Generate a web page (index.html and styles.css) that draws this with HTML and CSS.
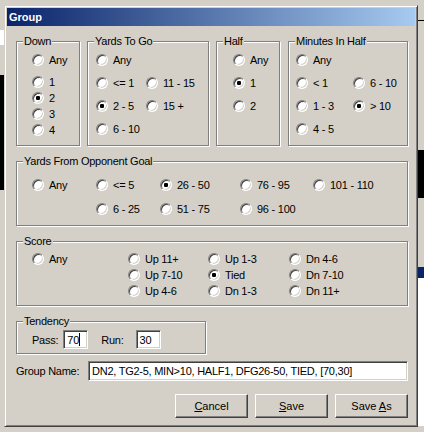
FILE: index.html
```html
<!DOCTYPE html>
<html lang="en">
<head>
  <meta charset="UTF-8">
  <title>Group</title>
  <link rel="stylesheet" href="styles.css">
</head>
<body>
  <div class="desk">
    <div class="strip left">
      <span class="s-grey" style="height:30px"></span>
      <span class="s-white" style="height:15px"></span>
      <span class="s-grey" style="height:30px"></span>
      <span class="s-black" style="height:115px"></span>
      <span class="s-grey fill"></span>
    </div>

    <div class="dialog">
      <div class="titlebar">Group</div>
      <div class="content">

        <div class="row1">
          <fieldset class="box down">
            <legend>Down</legend>
            <div class="opts down-opts">
              <label class="opt first"><span class="radio"></span>Any</label>
              <label class="opt"><span class="radio"></span>1</label>
              <label class="opt"><span class="radio on"></span>2</label>
              <label class="opt"><span class="radio"></span>3</label>
              <label class="opt"><span class="radio"></span>4</label>
            </div>
          </fieldset>

          <fieldset class="box ytg">
            <legend>Yards To Go</legend>
            <div class="opts ytg-opts">
              <label class="opt"><span class="radio"></span>Any</label>
              <span></span>
              <label class="opt"><span class="radio"></span>&lt;= 1</label>
              <label class="opt"><span class="radio"></span>11 - 15</label>
              <label class="opt"><span class="radio on"></span>2 - 5</label>
              <label class="opt"><span class="radio"></span>15 +</label>
              <label class="opt"><span class="radio"></span>6 - 10</label>
            </div>
          </fieldset>

          <fieldset class="box half">
            <legend>Half</legend>
            <div class="opts half-opts">
              <label class="opt"><span class="radio"></span>Any</label>
              <label class="opt"><span class="radio on"></span>1</label>
              <label class="opt"><span class="radio"></span>2</label>
            </div>
          </fieldset>

          <fieldset class="box minutes">
            <legend>Minutes In Half</legend>
            <div class="opts min-opts">
              <label class="opt"><span class="radio"></span>Any</label>
              <span></span>
              <label class="opt"><span class="radio"></span>&lt; 1</label>
              <label class="opt"><span class="radio"></span>6 - 10</label>
              <label class="opt"><span class="radio"></span>1 - 3</label>
              <label class="opt"><span class="radio on"></span>&gt; 10</label>
              <label class="opt"><span class="radio"></span>4 - 5</label>
            </div>
          </fieldset>
        </div>

        <fieldset class="box yfog">
          <legend>Yards From Opponent Goal</legend>
          <div class="opts yfog-opts">
            <label class="opt"><span class="radio"></span>Any</label>
            <label class="opt"><span class="radio"></span>&lt;= 5</label>
            <label class="opt"><span class="radio on"></span>26 - 50</label>
            <label class="opt"><span class="radio"></span>76 - 95</label>
            <label class="opt"><span class="radio"></span>101 - 110</label>
            <span></span>
            <label class="opt"><span class="radio"></span>6 - 25</label>
            <label class="opt"><span class="radio"></span>51 - 75</label>
            <label class="opt"><span class="radio"></span>96 - 100</label>
          </div>
        </fieldset>

        <fieldset class="box score">
          <legend>Score</legend>
          <div class="opts score-opts">
            <label class="opt"><span class="radio"></span>Any</label>
            <label class="opt"><span class="radio"></span>Up 11+</label>
            <label class="opt"><span class="radio"></span>Up 1-3</label>
            <label class="opt"><span class="radio"></span>Dn 4-6</label>
            <span></span>
            <label class="opt"><span class="radio"></span>Up 7-10</label>
            <label class="opt"><span class="radio on"></span>Tied</label>
            <label class="opt"><span class="radio"></span>Dn 7-10</label>
            <span></span>
            <label class="opt"><span class="radio"></span>Up 4-6</label>
            <label class="opt"><span class="radio"></span>Dn 1-3</label>
            <label class="opt"><span class="radio"></span>Dn 11+</label>
          </div>
        </fieldset>

        <fieldset class="box tendency">
          <legend>Tendency</legend>
          <div class="tend-row">
            <span>Pass:</span>
            <span class="edit pass">70<i class="caret"></i></span>
            <span class="run-label">Run:</span>
            <span class="edit run">30</span>
          </div>
        </fieldset>

        <div class="name-row">
          <span>Group Name:</span>
          <span class="edit name">DN2, TG2-5, MIN&gt;10, HALF1, DFG26-50, TIED, [70,30]</span>
        </div>

        <div class="buttons">
          <button><u>C</u>ancel</button>
          <button><u>S</u>ave</button>
          <button>Save <u>A</u>s</button>
        </div>

      </div>
    </div>

    <div class="strip right">
      <span class="s-grey" style="height:20px"></span>
      <span class="s-black" style="height:1px"></span>
      <span class="s-grey" style="height:129px"></span>
      <span class="s-black" style="height:48px"></span>
      <span class="s-grey" style="height:69px"></span>
      <span class="s-navy" style="height:11px"></span>
      <span class="s-white" style="height:148px"></span>
      <span class="s-grey fill"></span>
    </div>
  </div>
</body>
</html>
```

FILE: styles.css
```css
* { box-sizing: border-box; }
body { margin: 0; width: 424px; height: 432px; overflow: hidden; background: #d4d0c8; font-family: "Liberation Sans", Arial, sans-serif; font-size: 11px; letter-spacing: -0.25px; color: #000; }

.desk { display: grid; grid-template-columns: 4px 414px 6px; height: 432px; }
.strip { display: flex; flex-direction: column; }
.strip span { display: block; flex: none; }
.strip .fill { flex: 1; }
.s-grey { background: #d4d0c8; }
.s-white { background: #fff; }
.s-black { background: #000; }
.s-navy { background: #0a246a; }

.dialog { margin-top: 5px; height: 422px; padding: 2px; border: 1px solid; border-color: #d4d0c8 #404040 #404040 #d4d0c8; box-shadow: inset 1px 1px #fff, inset -1px -1px #808080; background: #d4d0c8; display: flex; flex-direction: column; }
.titlebar { height: 18px; line-height: 18px; padding-left: 2px; color: #fff; font-weight: bold; letter-spacing: 0; background: linear-gradient(to right, #0a246a, #a6caf0); }
.content { padding: 9px 7px 0 9px; display: flex; flex-direction: column; }

.box { margin: 0; padding: 0; min-width: 0; border: 1px solid #808080; box-shadow: 1px 1px 0 #fff, inset 1px 1px 0 #fff; }
.box legend { margin-left: 6px; padding: 0 1px; line-height: 13px; background: #d4d0c8; }

.opt { display: flex; align-items: center; gap: 5px; height: 12px; white-space: nowrap; }
.radio { flex: none; width: 12px; height: 12px; border-radius: 50%; border: 1px solid; border-color: #808080 #fff #fff #808080; background: #fff; box-shadow: inset 1px 1px #404040, inset -1px -1px #d4d0c8; }
.radio.on { background: radial-gradient(circle at 50% 50%, #000 0 2px, #fff 2.4px); }

.row1 { display: flex; gap: 7px; }
.down { width: 64px; }
.ytg { width: 122px; }
.half { width: 64px; }
.minutes { width: 120px; margin-left: 1px; }

.down-opts { display: flex; flex-direction: column; gap: 4px; padding: 6px 0 9px 15px; }
.down-opts .first { margin-bottom: 6px; }
.ytg-opts { display: grid; grid-template-columns: 50px auto; row-gap: 11px; padding: 6px 0 0 8px; }
.half-opts { display: flex; flex-direction: column; gap: 11px; padding: 6px 0 0 16px; }
.min-opts { display: grid; grid-template-columns: 57px auto; row-gap: 11px; padding: 6px 0 0 7px; }

.yfog { margin-top: 9px; }
.yfog-opts { display: grid; grid-template-columns: 64px 64px 80px 73px auto; row-gap: 12px; padding: 11px 0 10px 15px; }

.score { margin-top: 9px; }
.score-opts { display: grid; grid-template-columns: 96px 80px 81px auto; row-gap: 4px; padding: 5px 0 8px 15px; }

.tendency { margin-top: 9px; width: 190px; }
.tend-row { display: flex; align-items: center; padding: 2px 0 4px 15px; }
.run-label { margin-left: 13px; }

.edit { display: flex; align-items: center; height: 19px; padding: 0 3px; white-space: nowrap; overflow: hidden; background: #fff; border: 1px solid; border-color: #808080 #fff #fff #808080; box-shadow: inset 1px 1px #404040, inset -1px -1px #d4d0c8; }
.pass { width: 25px; margin-left: 5px; }
.run { width: 25px; margin-left: 12px; }
.caret { display: inline-block; width: 1px; height: 13px; background: #000; }

.name-row { display: flex; align-items: center; justify-content: space-between; margin-top: 7px; }
.name { width: 320px; height: 20px; }

.buttons { display: flex; justify-content: flex-end; gap: 7px; margin-top: 13px; }
.buttons button { width: 73px; height: 24px; padding: 0; font: inherit; color: #000; background: #d4d0c8; border: 1px solid; border-color: #fff #404040 #404040 #fff; box-shadow: inset -1px -1px #808080; }
```
